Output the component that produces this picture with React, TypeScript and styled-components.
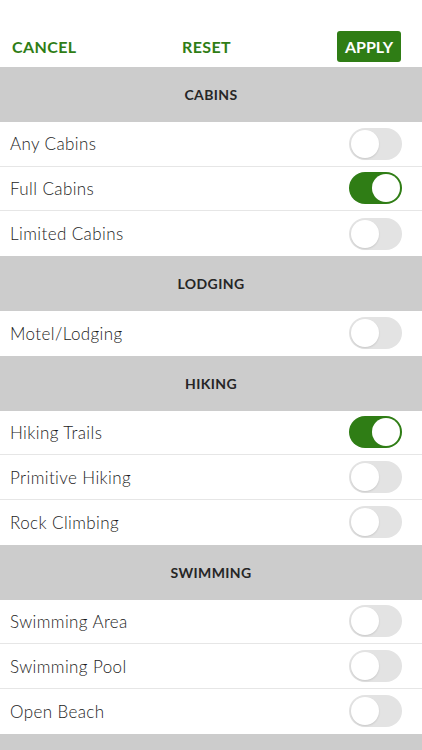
import React, { useState } from 'react';
import styled, { createGlobalStyle } from 'styled-components';

const GlobalStyle = createGlobalStyle`
    body {
        margin: 0;
        background: #ffffff;
        font-family: "Lato", "Open Sans", sans-serif;
    }
`

type Option = {
    label: string
    on: boolean
}

type Section = {
    title: string
    options: Option[]
}

const sections: Section[] = [
    {
        title: 'Cabins',
        options: [
            { label: 'Any Cabins', on: false },
            { label: 'Full Cabins', on: true },
            { label: 'Limited Cabins', on: false },
        ],
    },
    {
        title: 'Lodging',
        options: [{ label: 'Motel/Lodging', on: false }],
    },
    {
        title: 'Hiking',
        options: [
            { label: 'Hiking Trails', on: true },
            { label: 'Primitive Hiking', on: false },
            { label: 'Rock Climbing', on: false },
        ],
    },
    {
        title: 'Swimming',
        options: [
            { label: 'Swimming Area', on: false },
            { label: 'Swimming Pool', on: false },
            { label: 'Open Beach', on: false },
        ],
    },
    {
        title: '',
        options: [],
    },
]

const Toggle = (props: { on: boolean; onClick: () => void }) => {
    return (
        <Track $on={props.on} onClick={props.onClick}>
            <Knob $on={props.on} />
        </Track>
    )
}

export default function App() {
    const [state, setState] = useState(sections)

    const flip = (s: number, o: number) => {
        setState(prev => prev.map((sec, i) => i !== s ? sec : {
            ...sec,
            options: sec.options.map((opt, j) => j !== o ? opt : { ...opt, on: !opt.on }),
        }))
    }

    return (
        <Page>
            <GlobalStyle />
            <TopBar>
                <TextButton $align="start">CANCEL</TextButton>
                <TextButton $align="center">RESET</TextButton>
                <ApplyButton>APPLY</ApplyButton>
            </TopBar>
            {state.map((sec, i) => (
                <div key={i}>
                    <SectionHeader>{sec.title}</SectionHeader>
                    {sec.options.map((opt, j) => (
                        <Row key={opt.label} $last={j === sec.options.length - 1}>
                            <Label>{opt.label}</Label>
                            <Toggle on={opt.on} onClick={() => flip(i, j)} />
                        </Row>
                    ))}
                </div>
            ))}
        </Page>
    )
}

const Page = styled.div`
    width: 422px;
    height: 750px;
    overflow: hidden;
    background: #ffffff;
`

const TopBar = styled.div`
    height: 67px;
    box-sizing: border-box;
    padding: 31px 21px 0 12px;
    display: grid;
    grid-template-columns: 1fr auto 1fr;
    align-items: start;
`

const TextButton = styled.button<{ $align: string }>`
    justify-self: ${p => p.$align};
    border: none;
    background: none;
    padding: 0;
    height: 31px;
    color: #2f7d15;
    font-family: "Lato", sans-serif;
    font-weight: 700;
    font-size: 16px;
    letter-spacing: 0.4px;
`

const ApplyButton = styled.button`
    justify-self: end;
    border: none;
    background: #2f7d15;
    color: #ffffff;
    width: 64px;
    height: 31px;
    border-radius: 3px;
    font-family: "Lato", sans-serif;
    font-weight: 700;
    font-size: 16px;
    padding: 0;
`

const SectionHeader = styled.div`
    height: 55px;
    background: #cccccc;
    display: flex;
    align-items: center;
    justify-content: center;
    text-transform: uppercase;
    font-size: 14px;
    font-weight: 700;
    color: #262626;
    letter-spacing: 0.4px;
`

const Row = styled.div<{ $last: boolean }>`
    height: 44.67px;
    box-sizing: border-box;
    display: flex;
    align-items: center;
    justify-content: space-between;
    padding: 0 20px 0 10px;
    border-bottom: ${p => p.$last ? 'none' : '1px solid #e6e6e6'};
`

const Label = styled.span`
    font-size: 17px;
    font-weight: 300;
    color: #1c1c1c;
    letter-spacing: 0.4px;
`

const Track = styled.div<{ $on: boolean }>`
    width: 53px;
    height: 32px;
    box-sizing: border-box;
    border-radius: 16px;
    background: ${p => p.$on ? '#2f7d15' : '#e3e3e3'};
    position: relative;
    cursor: pointer;
`

const Knob = styled.div<{ $on: boolean }>`
    position: absolute;
    top: 2px;
    left: ${p => p.$on ? '23px' : '2px'};
    width: 28px;
    height: 28px;
    box-sizing: border-box;
    border-radius: 50%;
    background: #ffffff;
    box-shadow: ${p => p.$on ? 'none' : '0 1px 2px rgba(0,0,0,0.12)'};
`
